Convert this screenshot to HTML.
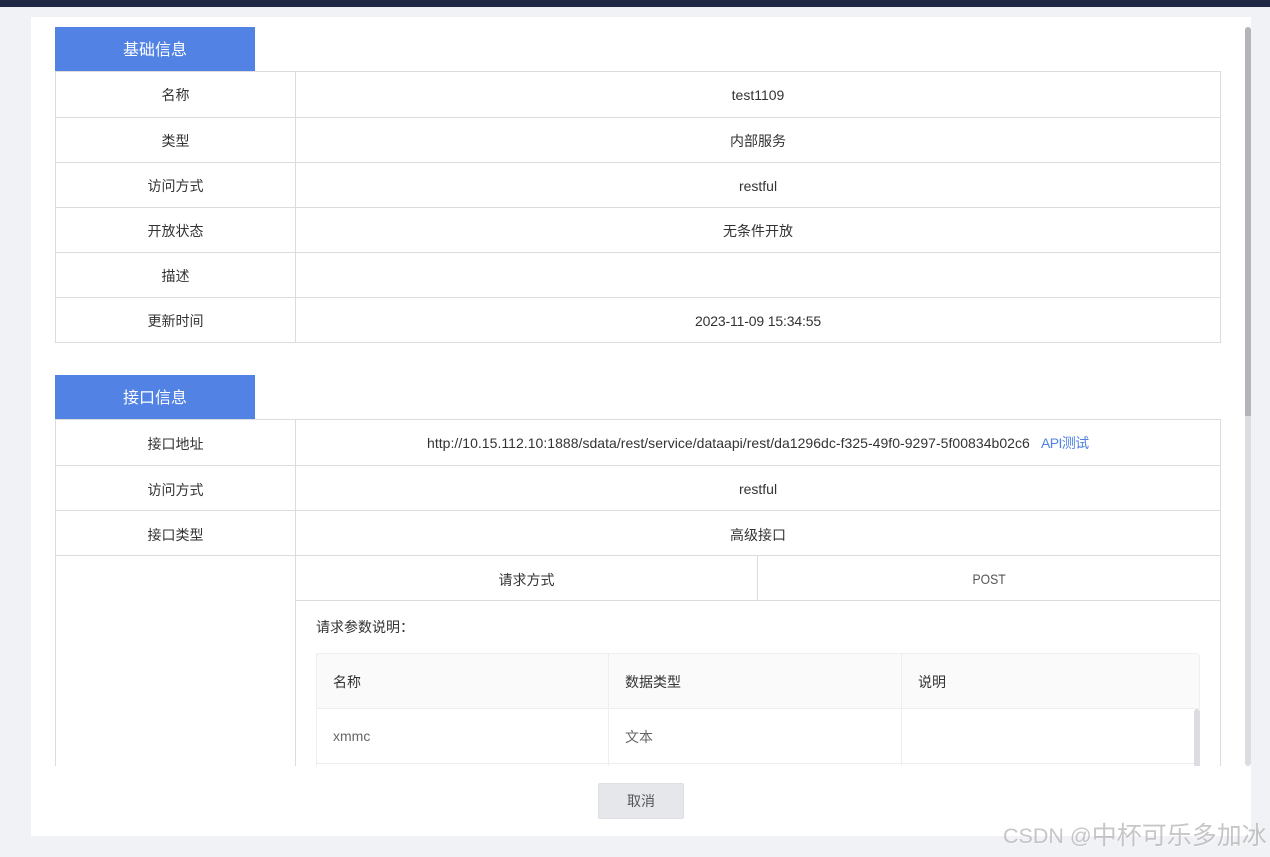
<!DOCTYPE html>
<html lang="zh">
<head>
<meta charset="utf-8">
<title>接口详情</title>
<style>
html,body{margin:0;padding:0;width:1270px;height:857px;overflow:hidden;background:#f0f2f6;}
body{position:relative;font-family:"Liberation Sans","Noto Sans CJK SC",sans-serif;font-size:14px;color:#333;}
div{position:absolute;box-sizing:border-box;}
.l{background:#dcdcdc;}
.il{background:#eeeeee;}
.t{text-align:center;height:20px;line-height:20px;white-space:nowrap;}
.m{margin-top:1px;}
.k{left:56px;width:239px;}
.v{left:296px;width:924px;}
.h{left:55px;width:200px;height:44px;background:#5182e4;color:#fff;font-size:16px;line-height:48px;text-align:center;}
.p{text-align:left;height:20px;line-height:20px;white-space:nowrap;}
</style>
</head>
<body>
<div style="left:0;top:0;width:1270px;height:7px;background:#1f2945;"></div>
<div style="left:31px;top:17px;width:1220px;height:819px;background:#fff;"></div>

<div class="h" style="top:27px;">基础信息</div>
<div class="l" style="left:55px;top:71px;width:1166px;height:1px;"></div>
<div class="l" style="left:55px;top:117px;width:1166px;height:1px;"></div>
<div class="l" style="left:55px;top:162px;width:1166px;height:1px;"></div>
<div class="l" style="left:55px;top:207px;width:1166px;height:1px;"></div>
<div class="l" style="left:55px;top:252px;width:1166px;height:1px;"></div>
<div class="l" style="left:55px;top:297px;width:1166px;height:1px;"></div>
<div class="l" style="left:55px;top:342px;width:1166px;height:1px;"></div>
<div class="l" style="left:55px;top:71px;width:1px;height:272px;"></div>
<div class="l" style="left:295px;top:71px;width:1px;height:272px;"></div>
<div class="l" style="left:1220px;top:71px;width:1px;height:272px;"></div>

<div class="t k" style="top:85px;">名称</div>
<div class="t v" style="top:85px;">test1109</div>
<div class="t k" style="top:131px;">类型</div>
<div class="t v" style="top:131px;">内部服务</div>
<div class="t k" style="top:176px;">访问方式</div>
<div class="t v" style="top:176px;">restful</div>
<div class="t k" style="top:221px;">开放状态</div>
<div class="t v" style="top:221px;">无条件开放</div>
<div class="t k" style="top:266px;">描述</div>
<div class="t k" style="top:311px;">更新时间</div>
<div class="t v" style="top:311px;letter-spacing:-.16px;">2023-11-09 15:34:55</div>

<div class="h" style="top:375px;">接口信息</div>
<div class="l" style="left:55px;top:419px;width:1166px;height:1px;"></div>
<div class="l" style="left:55px;top:465px;width:1166px;height:1px;"></div>
<div class="l" style="left:55px;top:510px;width:1166px;height:1px;"></div>
<div class="l" style="left:55px;top:555px;width:1166px;height:1px;"></div>
<div class="l" style="left:295px;top:600px;width:926px;height:1px;"></div>
<div class="l" style="left:55px;top:419px;width:1px;height:347px;"></div>
<div class="l" style="left:295px;top:419px;width:1px;height:347px;"></div>
<div class="l" style="left:1220px;top:419px;width:1px;height:347px;"></div>
<div class="l" style="left:757px;top:555px;width:1px;height:45px;"></div>

<div class="t k m" style="top:433px;">接口地址</div>
<div class="p" style="left:427px;top:433px;letter-spacing:.032px;">http://10.15.112.10:1888/sdata/rest/service/dataapi/rest/da1296dc-f325-49f0-9297-5f00834b02c6</div>
<div class="p" style="left:1041px;top:433px;color:#5182e4;letter-spacing:-.6px;">API测试</div>
<div class="t k m" style="top:479px;">访问方式</div>
<div class="t v" style="top:479px;">restful</div>
<div class="t k m" style="top:524px;">接口类型</div>
<div class="t v m" style="top:524px;">高级接口</div>
<div class="t m" style="left:296px;width:461px;top:569px;">请求方式</div>
<div class="t" style="left:758px;width:462px;top:569px;color:#555;"><span style="display:inline-block;transform:scaleX(.87);">POST</span></div>
<div class="p" style="left:316px;top:617px;">请求参数说明：</div>

<div style="left:316px;top:653px;width:884px;height:56px;background:#fafafa;border:1px solid #efefef;border-radius:4px 4px 0 0;"></div>
<div class="il" style="left:316px;top:708px;width:884px;height:1px;"></div>
<div class="il" style="left:316px;top:763px;width:878px;height:1px;"></div>
<div class="il" style="left:316px;top:653px;width:1px;height:113px;"></div>
<div class="il" style="left:608px;top:653px;width:1px;height:113px;"></div>
<div class="il" style="left:901px;top:653px;width:1px;height:113px;"></div>
<div class="p m" style="left:333px;top:671px;">名称</div>
<div class="p m" style="left:625px;top:671px;">数据类型</div>
<div class="p m" style="left:918px;top:671px;">说明</div>
<div class="p" style="left:333px;top:726px;color:#666;">xmmc</div>
<div class="p m" style="left:625px;top:726px;color:#666;">文本</div>
<div style="left:1194px;top:709px;width:6px;height:57px;background:#dcdde1;border-radius:3px 3px 0 0;"></div>

<div style="left:1245px;top:27px;width:6px;height:739px;background:#dcdde1;border-radius:3px;"></div>
<div style="left:1245px;top:27px;width:6px;height:389px;background:#b4b5ba;border-radius:3px 3px 0 0;"></div>

<div style="left:598px;top:783px;width:86px;height:36px;background:#e6e7eb;border:1px solid #dfe0e4;border-radius:2px;color:#555;text-align:center;line-height:35px;">取消</div>

<div style="left:1003px;top:820px;height:30px;line-height:30px;font-size:21.5px;color:rgba(165,165,165,.62);text-shadow:1px 1px 1px rgba(255,255,255,.5);white-space:nowrap;">CSDN @<span style="font-size:25px;position:relative;top:1px;">中杯可乐多加冰</span></div>
</body>
</html>
